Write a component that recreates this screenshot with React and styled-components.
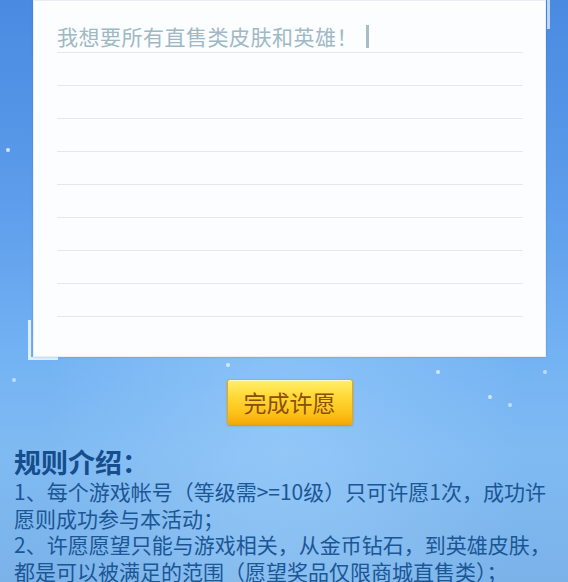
import React from "react";
import styled, { createGlobalStyle } from "styled-components";

const GlobalStyle = createGlobalStyle`
	html, body {
		margin: 0;
		padding: 0;
	}
	body {
		font-family: "Noto Sans CJK SC", "Noto Sans", sans-serif;
	}
`;

const wishLines = 9;

const Page = styled.div`
	width: 568px;
	height: 582px;
	overflow: hidden;
	background:
		radial-gradient(circle at 8px 150px, rgba(255, 255, 255, 0.7) 0 1.5px, transparent 2.5px),
		radial-gradient(circle at 228px 365px, rgba(255, 255, 255, 0.6) 0 1.5px, transparent 2.5px),
		radial-gradient(circle at 438px 372px, rgba(255, 255, 255, 0.6) 0 1.5px, transparent 2.5px),
		radial-gradient(circle at 490px 397px, rgba(255, 255, 255, 0.6) 0 1.5px, transparent 2.5px),
		radial-gradient(circle at 510px 405px, rgba(255, 255, 255, 0.5) 0 1.5px, transparent 2.5px),
		radial-gradient(circle at 14px 380px, rgba(255, 255, 255, 0.5) 0 1.5px, transparent 2.5px),
		radial-gradient(circle at 545px 372px, rgba(255, 255, 255, 0.5) 0 1.5px, transparent 2.5px),
		radial-gradient(ellipse at 50% 75%, rgba(170, 215, 255, 0.45), transparent 60%),
		linear-gradient(180deg, #4a8ae1 0%, #5d9deb 35%, #74b3f3 62%, #7fbaf2 78%, #7bb3e9 100%);
	display: flex;
	flex-direction: column;
`;

const Column = styled.div`
	padding: 0 22px 0 33px;
	display: flex;
	flex-direction: column;
	align-items: center;
`;

const CardFrame = styled.div`
	position: relative;
	width: 100%;

	&::before {
		content: "";
		position: absolute;
		left: -5px;
		bottom: -3px;
		width: 27px;
		height: 37px;
		border-left: 3px solid rgba(240, 248, 255, 0.85);
		border-bottom: 3px solid rgba(240, 248, 255, 0.85);
	}

	&::after {
		content: "";
		position: absolute;
		right: -4px;
		top: -10px;
		width: 24px;
		height: 36px;
		border-right: 3px solid rgba(240, 248, 255, 0.7);
		border-top: 3px solid rgba(240, 248, 255, 0.7);
	}
`;

const Card = styled.div`
	position: relative;
	z-index: 1;
	background: #fbfdfe;
	box-shadow: inset 0 0 0 1px #e8eef3, 0 0 2px rgba(40, 90, 160, 0.3);
	padding: 20px 23px 40px 24px;
`;

const Line = styled.div`
	height: 32px;
	border-bottom: 1px solid #e2e8ec;
	display: flex;
	align-items: center;
	font-size: 21px;
	color: #a0b8c4;
	letter-spacing: 0.5px;
`;

const Cursor = styled.span`
	display: inline-block;
	width: 3px;
	height: 23px;
	margin-left: 8px;
	background: #a9bcc6;
`;

const WishButton = styled.button`
	margin-top: 22px;
	width: 126px;
	height: 46px;
	border: 1px solid #eaa80c;
	border-radius: 3px;
	background: linear-gradient(180deg, #fff06a 0%, #ffd734 40%, #fcc21a 75%, #f5a90a 100%);
	box-shadow: 0 1px 2px rgba(140, 90, 0, 0.35), inset 0 1px 0 rgba(255, 255, 240, 0.7);
	font-family: "Noto Sans CJK SC", sans-serif;
	font-size: 23px;
	color: #8b4f05;
	padding: 0;
	cursor: pointer;
`;

const Rules = styled.div`
	padding: 22px 12px 0 14px;
	color: #1b5695;
`;

const RulesTitle = styled.h2`
	margin: 0;
	font-size: 27px;
	line-height: 30px;
	font-weight: 700;
	color: #164d8c;
`;

const RulesText = styled.p`
	margin: 1px 0 0;
	font-size: 21px;
	line-height: 26.5px;
`;

export default function App() {
	return (
		<>
			<GlobalStyle />
			<Page>
				<Column>
					<CardFrame>
						<Card>
							<Line>
								我想要所有直售类皮肤和英雄！
								<Cursor />
							</Line>
							{Array.from({ length: wishLines - 1 }).map((_, i) => (
								<Line key={i} />
							))}
						</Card>
					</CardFrame>
					<WishButton>完成许愿</WishButton>
				</Column>
				<Rules>
					<RulesTitle>规则介绍：</RulesTitle>
					<RulesText>
						1、每个游戏帐号（等级需&gt;=10级）只可许愿1次，成功许愿则成功参与本活动；
						<br />
						2、许愿愿望只能与游戏相关，从金币钻石，到英雄皮肤，都是可以被满足的范围（愿望奖品仅限商城直售类）；
					</RulesText>
				</Rules>
			</Page>
		</>
	);
}
